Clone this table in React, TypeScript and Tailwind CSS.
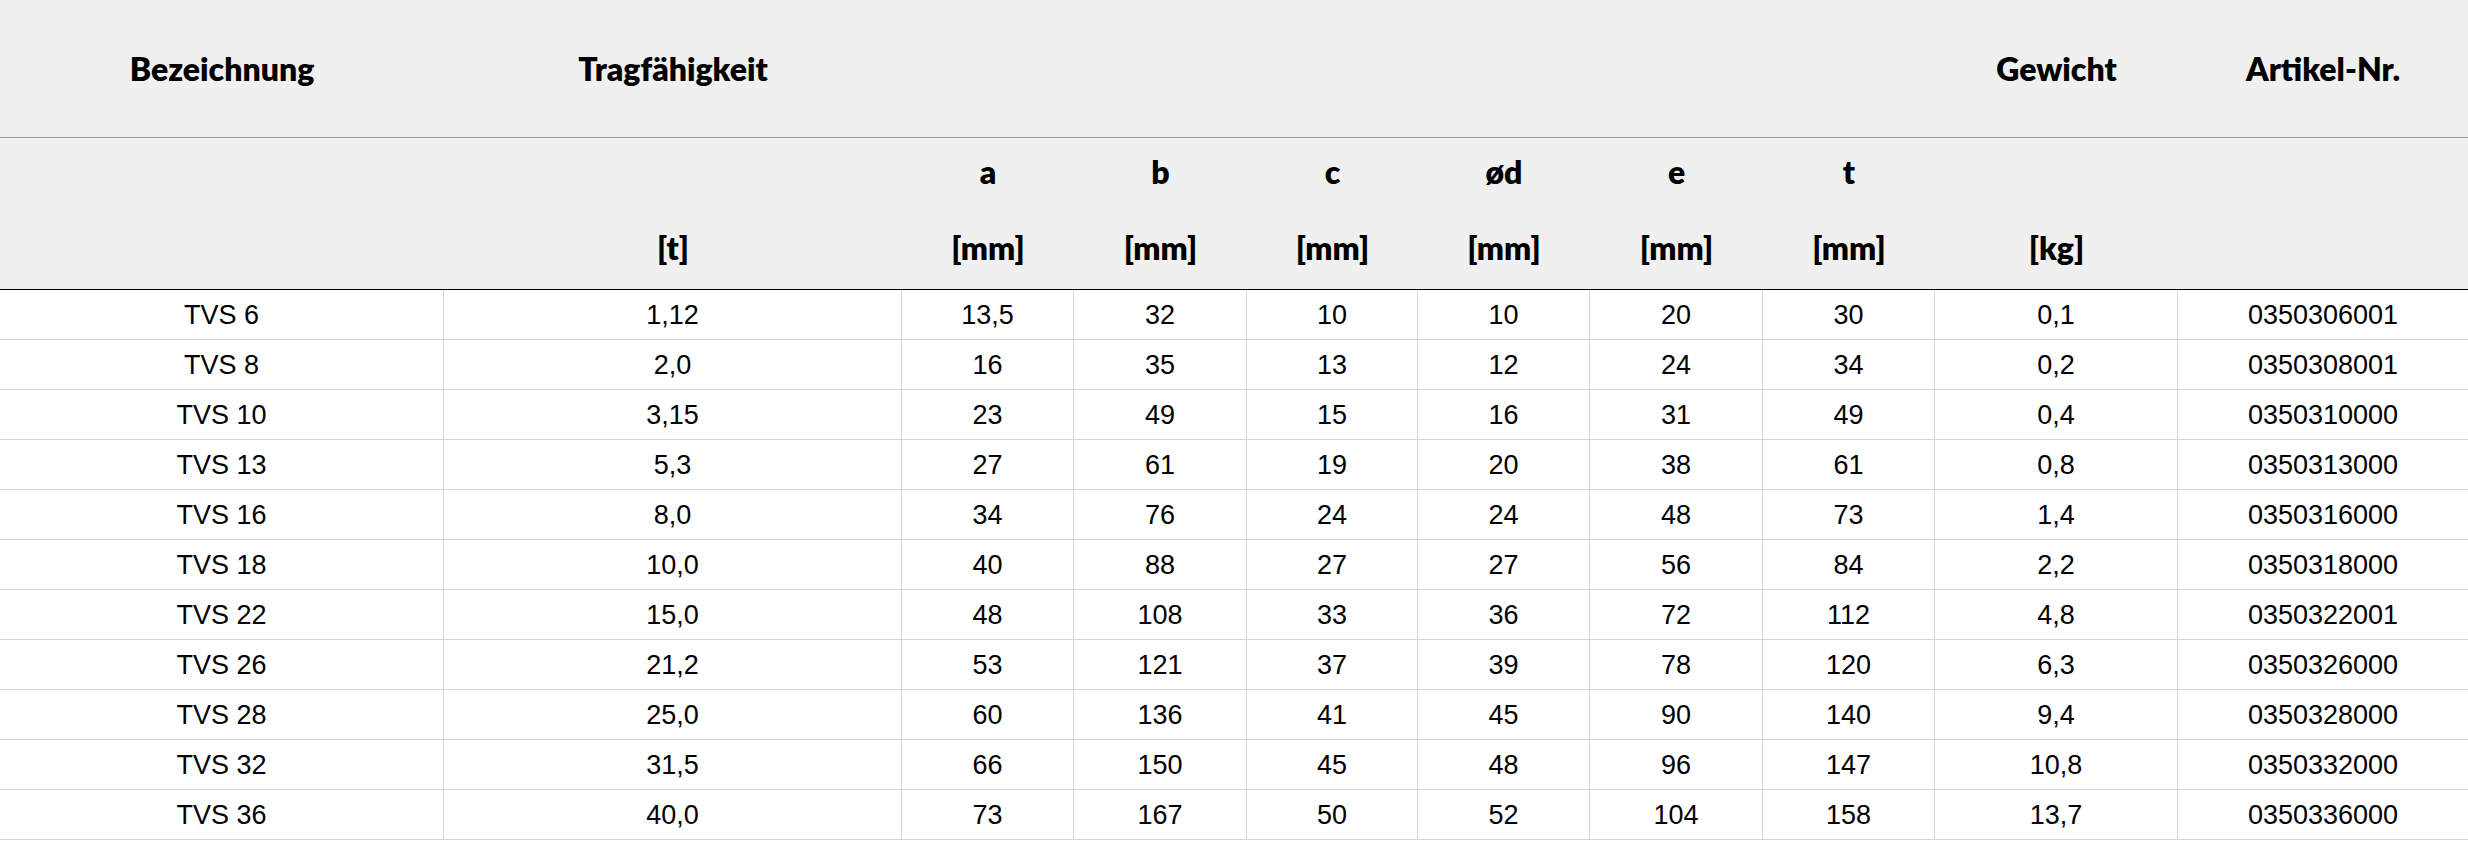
import React from "react";

const cols =
  "grid grid-cols-[444px_458px_172px_173px_171px_172px_173px_172px_243px_290px]";

const rows: string[][] = [
  ["TVS 6", "1,12", "13,5", "32", "10", "10", "20", "30", "0,1", "0350306001"],
  ["TVS 8", "2,0", "16", "35", "13", "12", "24", "34", "0,2", "0350308001"],
  ["TVS 10", "3,15", "23", "49", "15", "16", "31", "49", "0,4", "0350310000"],
  ["TVS 13", "5,3", "27", "61", "19", "20", "38", "61", "0,8", "0350313000"],
  ["TVS 16", "8,0", "34", "76", "24", "24", "48", "73", "1,4", "0350316000"],
  ["TVS 18", "10,0", "40", "88", "27", "27", "56", "84", "2,2", "0350318000"],
  ["TVS 22", "15,0", "48", "108", "33", "36", "72", "112", "4,8", "0350322001"],
  ["TVS 26", "21,2", "53", "121", "37", "39", "78", "120", "6,3", "0350326000"],
  ["TVS 28", "25,0", "60", "136", "41", "45", "90", "140", "9,4", "0350328000"],
  ["TVS 32", "31,5", "66", "150", "45", "48", "96", "147", "10,8", "0350332000"],
  ["TVS 36", "40,0", "73", "167", "50", "52", "104", "158", "13,7", "0350336000"],
];

const top = ["Bezeichnung", "Tragfähigkeit", "", "", "", "", "", "", "Gewicht", "Artikel-Nr."];
const sym = ["", "", "a", "b", "c", "ød", "e", "t", "", ""];
const unit = ["", "[t]", "[mm]", "[mm]", "[mm]", "[mm]", "[mm]", "[mm]", "[kg]", ""];

export default function App() {
  return (
    <div className="w-[2468px] h-[841px] bg-white">
      <div className="bg-[#f0f0f0] font-['Lato',sans-serif] font-extrabold text-[32px] text-black">
        <div className={`${cols} h-[138px] border-b border-[#999999]`}>
          {top.map((t, i) => (
            <div key={i} className="flex items-center justify-center pt-[1px] leading-[38px]">
              {t}
            </div>
          ))}
        </div>
        <div className={`${cols} h-[152px] border-b border-black pt-[15px]`}>
          {sym.map((s, i) => (
            <div key={i} className="flex flex-col items-center leading-[38px]">
              <div className="h-[38px]">{s}</div>
              <div className="h-[38px]"></div>
              <div className="h-[38px]">{unit[i]}</div>
            </div>
          ))}
        </div>
      </div>
      <div className="font-['Liberation_Sans',Arial,sans-serif] text-[27px] text-black">
        {rows.map((r, ri) => (
          <div key={ri} className={`${cols} h-[50px] border-b border-[#d4d4d4]`}>
            {r.map((c, ci) => (
              <div
                key={ci}
                className={`flex items-center justify-center leading-none pt-[2px] ${
                  ci < r.length - 1 ? "border-r border-[#d4d4d4]" : ""
                }`}
              >
                {c}
              </div>
            ))}
          </div>
        ))}
      </div>
    </div>
  );
}
